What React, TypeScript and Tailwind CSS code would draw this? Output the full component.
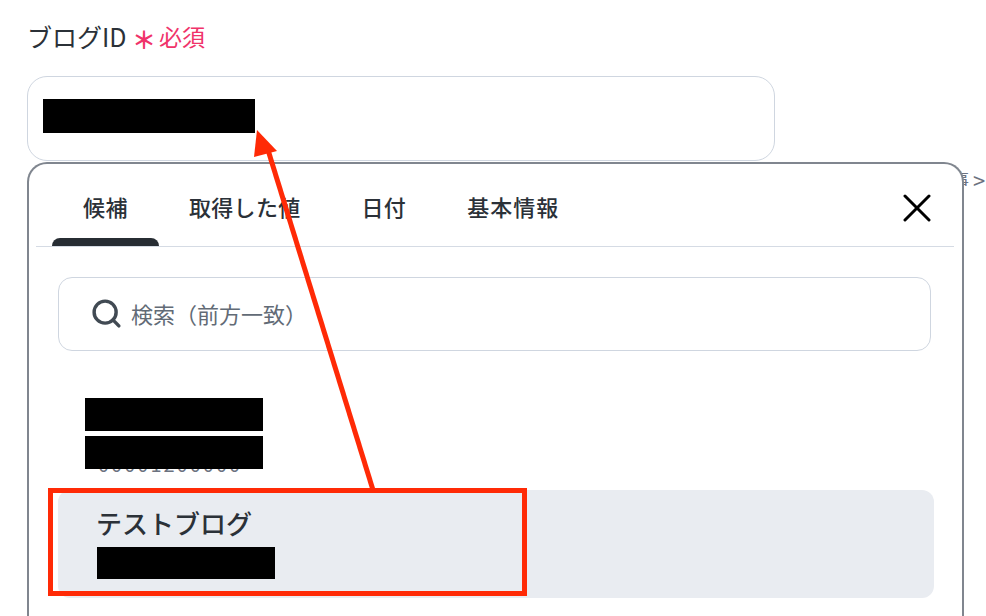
import { Search } from "lucide-react";

const font = { fontFamily: '"Noto Sans CJK JP", "Noto Sans", sans-serif' };

export default function App() {
  return (
    <div
      className="relative h-[616px] w-[986px] overflow-hidden bg-white text-[#2b3138]"
      style={font}
    >
      <div className="flex h-[76px] items-start pl-[27px] pt-[18px]">
        <span className="w-[105px] text-[25px] leading-[36px]">ブログID</span>
        <span className="mt-[3px] w-[27px] text-[24px] font-bold leading-[36px] text-[#f0336a]">＊</span>
        <span className="text-[23px] leading-[36px] text-[#f0336a]">必須</span>
      </div>

      <div className="ml-[27px] flex h-[85px] w-[748px] items-start rounded-[20px] border border-[#cfd6e0] pl-[15px] pt-[22px]">
        <div className="h-[34px] w-[212px] bg-black" />
      </div>

      <div className="relative ml-[27px] h-[500px] w-[937px]">
        <div className="absolute left-[925px] top-[3px] flex items-center whitespace-nowrap leading-[28px] text-[#6b7280]">
          <span className="text-[17px]">事</span>
          <span className="ml-[4px] text-[22px]">&gt;</span>
        </div>

        <div className="relative mt-px h-[500px] rounded-tl-[20px] rounded-tr-[20px] border-2 border-b-0 border-[#80868f] bg-white">
          <div className="relative ml-[7px] mr-[8px] flex h-[83px] items-start border-b border-[#d5dbe4]">
            <div className="relative ml-[16px] flex h-[82px] w-[107px] justify-center pt-[25px]">
              <span className="text-[22px] font-medium leading-[34px] tracking-[0.5px]">候補</span>
              <div className="absolute bottom-0 left-0 h-[8px] w-[107px] rounded-t-[8px] bg-[#272d33]" />
            </div>
            <span className="ml-[30px] mt-[25px] text-[22px] font-medium leading-[34px] tracking-[0.3px]">取得した値</span>
            <span className="ml-[61px] mt-[25px] text-[22px] font-medium leading-[34px] tracking-[0.3px]">日付</span>
            <span className="ml-[61px] mt-[25px] text-[22px] font-medium leading-[34px] tracking-[1px]">基本情報</span>
            <svg className="ml-auto mr-[23px] mt-[30px]" width="28" height="28" viewBox="0 0 28 28" fill="none" stroke="#000" strokeWidth="3" strokeLinecap="round">
              <line x1="2" y1="2" x2="26" y2="26" />
              <line x1="26" y1="2" x2="2" y2="26" />
            </svg>
          </div>

          <div className="ml-[29px] mt-[30px] flex h-[74px] w-[873px] items-center rounded-[14px] border border-[#cfd6e0] pl-[31px]">
            <Search className="-mt-[2px] h-[33px] w-[33px] text-[#414a53]" strokeWidth={2.5} />
            <span className="ml-[8px] -mt-[2px] text-[22px] leading-[32px] text-[#626b76]">検索（前方一致）</span>
          </div>

          <div className="ml-[56px] mt-[47px] w-[178px]">
            <div className="h-[33px] bg-black" />
            <div className="relative mt-[5px] h-[35px]">
              <div className="absolute -bottom-[3px] left-[13px] whitespace-nowrap text-[20px] leading-[20px] tracking-[2px] text-[#6b7280]">00001200000</div>
              <div className="absolute left-0 top-0 h-[33px] w-[178px] bg-black" />
            </div>
          </div>

          <div className="ml-[29px] mt-[19px] h-[108px] w-[876px] rounded-[12px] bg-[#e9ecf1] pl-[38px] pt-[14px]">
            <div className="text-[26px] font-medium leading-[38px] text-[#2b3138]">テストブログ</div>
            <div className="relative ml-px mt-[5px] h-[32px] w-[178px] bg-black" />
          </div>
        </div>
      </div>

      {/* Red annotation box and arrow lying over the page */}
      <div className="absolute left-[48px] top-[488px] h-[108px] w-[479px] border-[5px] border-[#ff2a06]" />
      <svg className="absolute left-0 top-0" width="986" height="616" viewBox="0 0 986 616" fill="none">
        <line x1="373" y1="490" x2="268" y2="150" stroke="#ff2a06" strokeWidth="5" />
        <polygon points="257,130 277,151 254,157" fill="#ff2a06" />
      </svg>
    </div>
  );
}
